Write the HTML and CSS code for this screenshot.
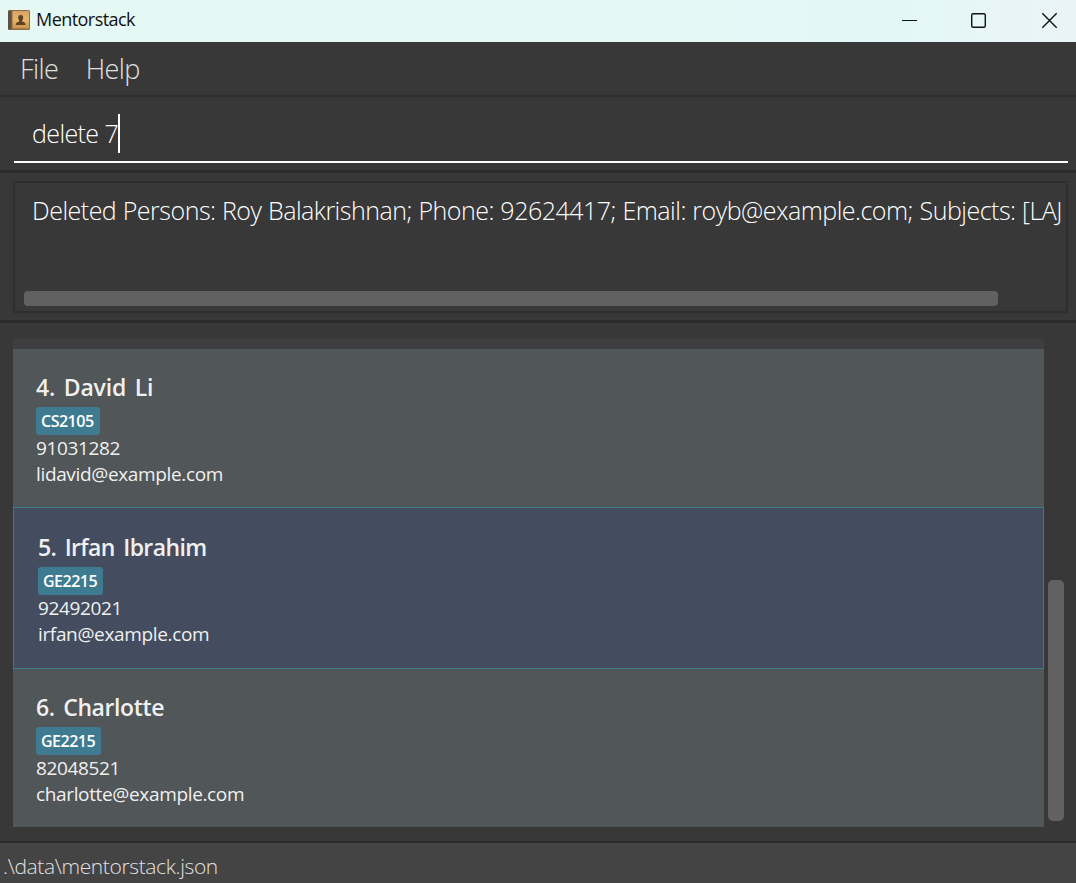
FILE: index.html
```html
<!DOCTYPE html>
<html lang="en">
<head>
<meta charset="utf-8">
<title>Mentorstack</title>
<link rel="stylesheet" href="styles.css">
</head>
<body>
<div class="window">
  <header class="titlebar">
    <svg class="app-icon" width="22" height="20" viewBox="0 0 22 20">
      <defs><linearGradient id="cover" x1="0" y1="0" x2="0" y2="1"><stop offset="0" stop-color="#d5a363"/><stop offset=".5" stop-color="#e8b56b"/><stop offset="1" stop-color="#c99448"/></linearGradient></defs>
      <rect width="22" height="20" rx="1.5" fill="#8f6c43"/>
      <rect x="0" y="0.5" width="3.5" height="19" rx="1" fill="#5c5049"/>
      <rect x="4.500" y="1" width="16.500" height="17.500" fill="url(#cover)"/>
      <path d="M12.700 5c1.800 0 2.600 1.200 2.500 2.900-.1 1.200-.6 1.900-1.100 2.500v1c1.700.5 3.500.9 3.500 3.600H7.800c0-2.700 1.800-3.100 3.500-3.600v-1c-.6-.6-1-1.300-1.100-2.500C10.100 6.200 10.900 5 12.700 5z" fill="#5b4327"/>
    </svg>
    <span class="title">Mentorstack</span>
    <svg class="controls" width="158" height="18" viewBox="0 0 158 18" fill="none" stroke="#111" stroke-width="1.400">
      <path d="M2 9.500H17" stroke-width="1"/>
      <rect x="71.700" y="2.700" width="13.600" height="13.600" rx="1.500"/>
      <path d="M142.300 2.300l14.400 14.400M156.700 2.300l-14.400 14.400"/>
    </svg>
  </header>
  <nav class="menubar"><span class="menu file">File</span><span class="menu help">Help</span></nav>
  <section class="command"><div class="field"><span class="typed">delete 7</span><span class="caret"></span></div></section>
  <section class="result">
    <div class="result-box">
      <div class="message">Deleted Persons: Roy Balakrishnan; Phone: 92624417; Email: royb@example.com; Subjects: [LAJ</div>
      <div class="h-thumb"></div>
    </div>
  </section>
  <main class="people">
    <div class="list">
      <div class="card-edge"></div>
      <article class="card first">
        <h2 class="name n4">4. David Li</h2><span class="tag">CS2105</span>
        <p class="line">91031282</p><p class="line">lidavid@example.com</p>
      </article>
      <article class="card selected">
        <h2 class="name n5">5. Irfan Ibrahim</h2><span class="tag">GE2215</span>
        <p class="line">92492021</p><p class="line">irfan@example.com</p>
      </article>
      <article class="card last">
        <h2 class="name n6">6. Charlotte</h2><span class="tag">GE2215</span>
        <p class="line">82048521</p><p class="line">charlotte@example.com</p>
      </article>
    </div>
    <div class="v-track"><div class="v-thumb"></div></div>
  </main>
  <footer class="status">.\data\mentorstack.json</footer>
</div>
</body>
</html>
```
FILE: styles.css
```css
* { box-sizing: border-box; }
body { margin: 0; font-family: "Open Sans", "Noto Sans", sans-serif; }
.window { width: 1076px; height: 883px; display: flex; flex-direction: column; overflow: hidden; background: #383838; white-space: nowrap; }
.titlebar { height: 42px; flex: none; display: flex; align-items: center; padding: 0 18px 3px 8px; background: linear-gradient(90deg, #e6f8f4 0%, #e5f8f5 60%, #e4f7f8 84%, #eaf4f7 100%); }
.title { margin-left: 6px; padding-bottom: 2px; font-size: 18px; letter-spacing: -0.55px; color: #111; }
.controls { margin-left: auto; }
.menubar { height: 55px; flex: none; display: flex; align-items: center; padding: 0 20px 1px; border-bottom: 2px solid #2e2e2e; color: #e0e0e0; font-size: 27px; font-weight: 300; }
.menu { letter-spacing: -0.6px; }
.help { margin-left: 27.500px; }
.command { height: 76px; flex: none; padding: 10px 8px 0 14px; border-bottom: 3px solid #2c2c2c; }
.field { height: 56px; display: flex; align-items: center; padding: 0 0 2px 18px; border-bottom: 2px solid #fff; color: #fff; font-size: 25px; font-weight: 300; }
.typed { letter-spacing: -0.6px; }
.caret { width: 1.500px; height: 39px; background: #fff; }
.result { height: 150px; flex: none; padding: 8px 8px 0 13px; border-bottom: 3px solid #2b2b2b; }
.result-box { height: 132px; border: 2px solid #2e2e2e; padding: 10px 2px 0 9px; display: flex; flex-direction: column; overflow: hidden; }
.message { height: 36px; flex: none; line-height: 34px; padding-left: 8px; color: #fff; font-size: 25px; font-weight: 300; letter-spacing: -0.5px; word-spacing: 0.5px; }
.h-thumb { width: 974px; height: 15px; flex: none; margin-top: 62px; border-radius: 4px; background: #616161; }
.people { height: 520px; flex: none; display: flex; padding: 16px 12px 14px 13px; border-bottom: 2px solid #2c2c2c; }
.list { width: 1031px; height: 488px; color: #f0f0f0; }
.card-edge { height: 10px; background: #3c3e3f; }
.card { height: 158px; padding: 20px 23px 0; background: #515658; }
.selected { height: 162px; padding: 21px 24px 0; background: #434d5f; border: 1px solid #3e7b91; }
.name { margin: 0; height: 38px; line-height: 36px; font-size: 23px; font-weight: 600; letter-spacing: -0.4px; word-spacing: 3px; }
.n4 { letter-spacing: -0.2px; }
.n5 { letter-spacing: -0.6px; }
.tag { display: block; width: 65px; height: 28px; line-height: 28px; padding-left: 5px; border-radius: 3px; background: #3e7b91; color: #fff; font-size: 16px; font-weight: 600; letter-spacing: -0.5px; }
.first .tag { width: 64px; }
.line { margin: 0; height: 26px; line-height: 26px; font-size: 19px; letter-spacing: -0.35px; }
.v-track { margin-left: 4px; padding-top: 241px; }
.v-thumb { width: 16px; height: 241px; border-radius: 5px; background: #616161; }
.status { height: 40px; line-height: 46px; padding-left: 3px; background: #444; color: #e0e0e0; font-size: 21px; font-weight: 300; letter-spacing: -0.37px; }
```
